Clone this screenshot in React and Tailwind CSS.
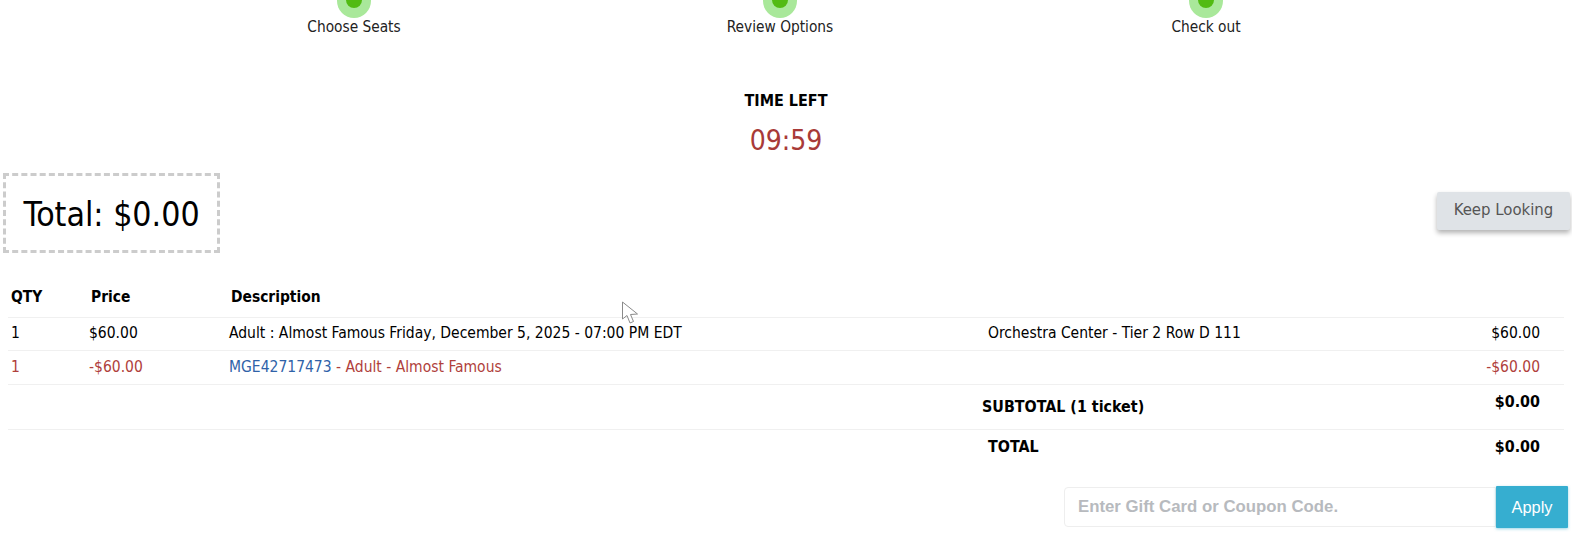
import React from 'react';

const steps = ['Choose Seats', 'Review Options', 'Check out'];

function Step({ label }) {
  return (
    <div className="flex flex-col items-center">
      <div className="w-[34px] h-[34px] rounded-full bg-[#a9e89a] flex items-center justify-center">
        <div className="w-[16px] h-[16px] rounded-full bg-[#52bb12] mb-[2px]" />
      </div>
      <p className="-mt-[1px] text-[15.3px] leading-[20px] text-[#222]">{label}</p>
    </div>
  );
}

export default function App() {
  const head = 'p-0 font-bold text-left';
  return (
    <div className="relative w-[1572px] h-[541px] overflow-hidden bg-white text-black [font-family:'DejaVu_Sans',sans-serif] [font-stretch:condensed]">
      {/* Steps */}
      <div className="grid grid-cols-[426px_426px_426px] pl-[141px] -mt-[16px]">
        {steps.map(s => <Step key={s} label={s} />)}
      </div>

      {/* Timer */}
      <div className="mt-[54px] text-center">
        <p className="text-[16px] leading-[20px] font-bold">TIME LEFT</p>
        <p className="mt-[10px] text-[28px] leading-[40px] text-[#a83a38]">09:59</p>
      </div>

      {/* Total + keep looking */}
      <div className="flex items-center justify-between pl-[3px] pr-[2px] mt-[12px]">
        <div className="w-[217px] h-[80px] pt-[5px] border-[3px] border-dashed border-[#cccccc] flex items-center justify-center text-[33.6px]">
          Total: $0.00
        </div>
        <button className="w-[133px] h-[38px] mb-[5px] bg-[#dfe3e7] rounded-[2px] text-[16.6px] text-[#555] shadow-[0_3px_5px_rgba(0,0,0,0.3)]">
          Keep Looking
        </button>
      </div>

      {/* Order lines */}
      <table className="ml-[8px] mt-[26px] w-[1556px] table-fixed border-collapse text-[15.5px]">
        <colgroup>
          <col className="w-[81px]" />
          <col className="w-[140px]" />
          <col className="w-[753px]" />
          <col className="w-[470px]" />
          <col />
        </colgroup>
        <thead>
          <tr className="h-[38px] border-b border-[#f0f0f0] text-[15.4px]">
            <th className={`${head} pl-[3px]`}>QTY</th>
            <th className={`${head} pl-[2px]`}>Price</th>
            <th className={`${head} pl-[2px]`}>Description</th>
            <th />
            <th />
          </tr>
        </thead>
        <tbody>
          <tr className="h-[33px] border-b border-[#f0f0f0]">
            <td className="pl-[3px] pt-[1px]">1</td>
            <td className="pt-[1px]">$60.00</td>
            <td className="pt-[1px]">Adult : Almost Famous Friday, December 5, 2025 - 07:00 PM EDT</td>
            <td className="pl-[6px] pt-[1px]">Orchestra Center - Tier 2 Row D 111</td>
            <td className="text-right pr-[24px] pt-[1px]">$60.00</td>
          </tr>
          <tr className="h-[34px] border-b border-[#f0f0f0] text-[#b03f3c]">
            <td className="pl-[3px] pt-[1px]">1</td>
            <td className="pt-[1px]">-$60.00</td>
            <td className="pt-[1px]"><span className="text-[#2f62a8]">MGE42717473</span> - Adult - Almost Famous</td>
            <td />
            <td className="text-right pr-[24px] pt-[1px]">-$60.00</td>
          </tr>
          <tr className="h-[45px] border-b border-[#f0f0f0] font-bold text-[15.9px]">
            <td /><td /><td />
            <td className="pt-[1px]">SUBTOTAL (1 ticket)</td>
            <td className="text-right pr-[24px] pb-[9px]">$0.00</td>
          </tr>
          <tr className="h-[35px] font-bold text-[15.9px]">
            <td /><td /><td />
            <td className="pl-[6px]">TOTAL</td>
            <td className="text-right pr-[24px]">$0.00</td>
          </tr>
        </tbody>
      </table>

      {/* Coupon */}
      <div className="flex justify-end pr-[4px] mt-[22px]">
        <div className="w-[432px] h-[40px] mt-[1px] border border-[#eeeeee] rounded-l-[4px] flex items-center pl-[13px] text-[16.8px] font-bold text-[#b7babe] [font-family:'Liberation_Sans',sans-serif] [font-stretch:normal]">
          Enter Gift Card or Coupon Code.
        </div>
        <button className="w-[72px] h-[42px] bg-[#36aed0] text-white text-[16.4px] rounded-[1px] shadow-[0_1px_3px_rgba(54,174,208,0.5)] [font-family:'Liberation_Sans',sans-serif] [font-stretch:normal]">
          Apply
        </button>
      </div>

      {/* Mouse pointer from the recording */}
      <svg className="absolute left-[621px] top-[301px]" width="18" height="24" viewBox="0 0 18 24" fill="#fff" stroke="#8a8a8a" strokeWidth="1">
        <path d="M1.5 1 L1.5 18 L6 14.5 L9 22 L12.5 20.5 L9.5 13.5 L16.5 13 Z" />
      </svg>
    </div>
  );
}
